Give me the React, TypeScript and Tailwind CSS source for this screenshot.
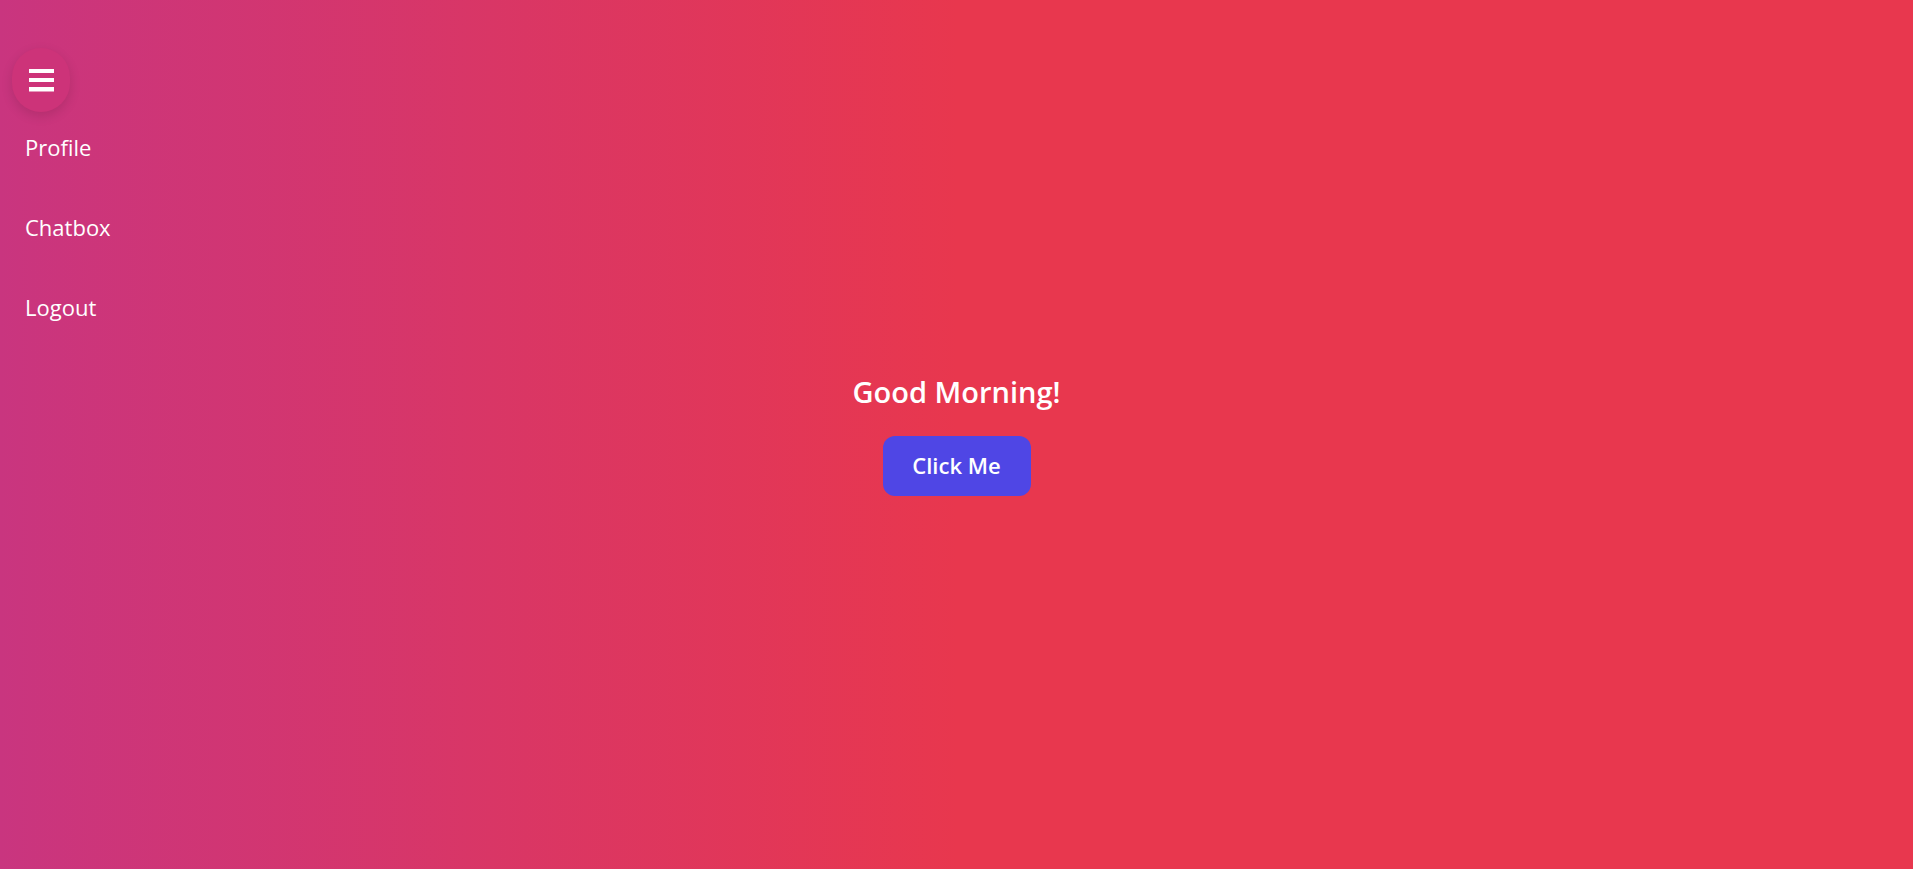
import React, { useState } from 'react'

const menuItems = ["Profile", "Chatbox", "Logout"]

const App = () => {
  const [open, setOpen] = useState(true)
  const [clicks, setClicks] = useState(0)

  return (
    <div className="relative h-[869px] w-full overflow-hidden bg-[linear-gradient(to_right,#c9357f_0%,#e8374e_50%,#e8374e_100%)] font-['Open_Sans',sans-serif] text-white">
      {/* side menu */}
      <div className="absolute left-[12px] top-[48px] flex flex-col">
        <button
          type="button"
          onClick={() => setOpen(!open)}
          className="flex h-[64px] w-[58px] items-center justify-center rounded-full bg-[#cd3379] shadow-[0_4px_12px_rgba(0,0,0,0.12)]"
        >
          <svg width="25" height="23" viewBox="0 0 25 23" fill="white">
            <rect x="0" y="0" width="25" height="4" />
            <rect x="0" y="9" width="25" height="4" />
            <rect x="0" y="18" width="25" height="4.5" />
          </svg>
        </button>
        {open && (
          <ul className="mt-[22px] flex flex-col gap-[54px] pl-[13px]">
            {menuItems.map((item) => (
              <li key={item} className="text-[22px] leading-[26px]">{item}</li>
            ))}
          </ul>
        )}
      </div>

      {/* main */}
      <div className="flex h-full flex-col items-center justify-center gap-[26px]">
        <h1 className="text-[29px] font-semibold leading-[36px]">Good Morning!</h1>
        <button
          type="button"
          onClick={() => setClicks(clicks + 1)}
          className="h-[60px] w-[148px] rounded-[12px] bg-[#4f46e5] text-[22px] font-semibold"
        >
          Click Me
        </button>
      </div>
    </div>
  )
}

export default App
